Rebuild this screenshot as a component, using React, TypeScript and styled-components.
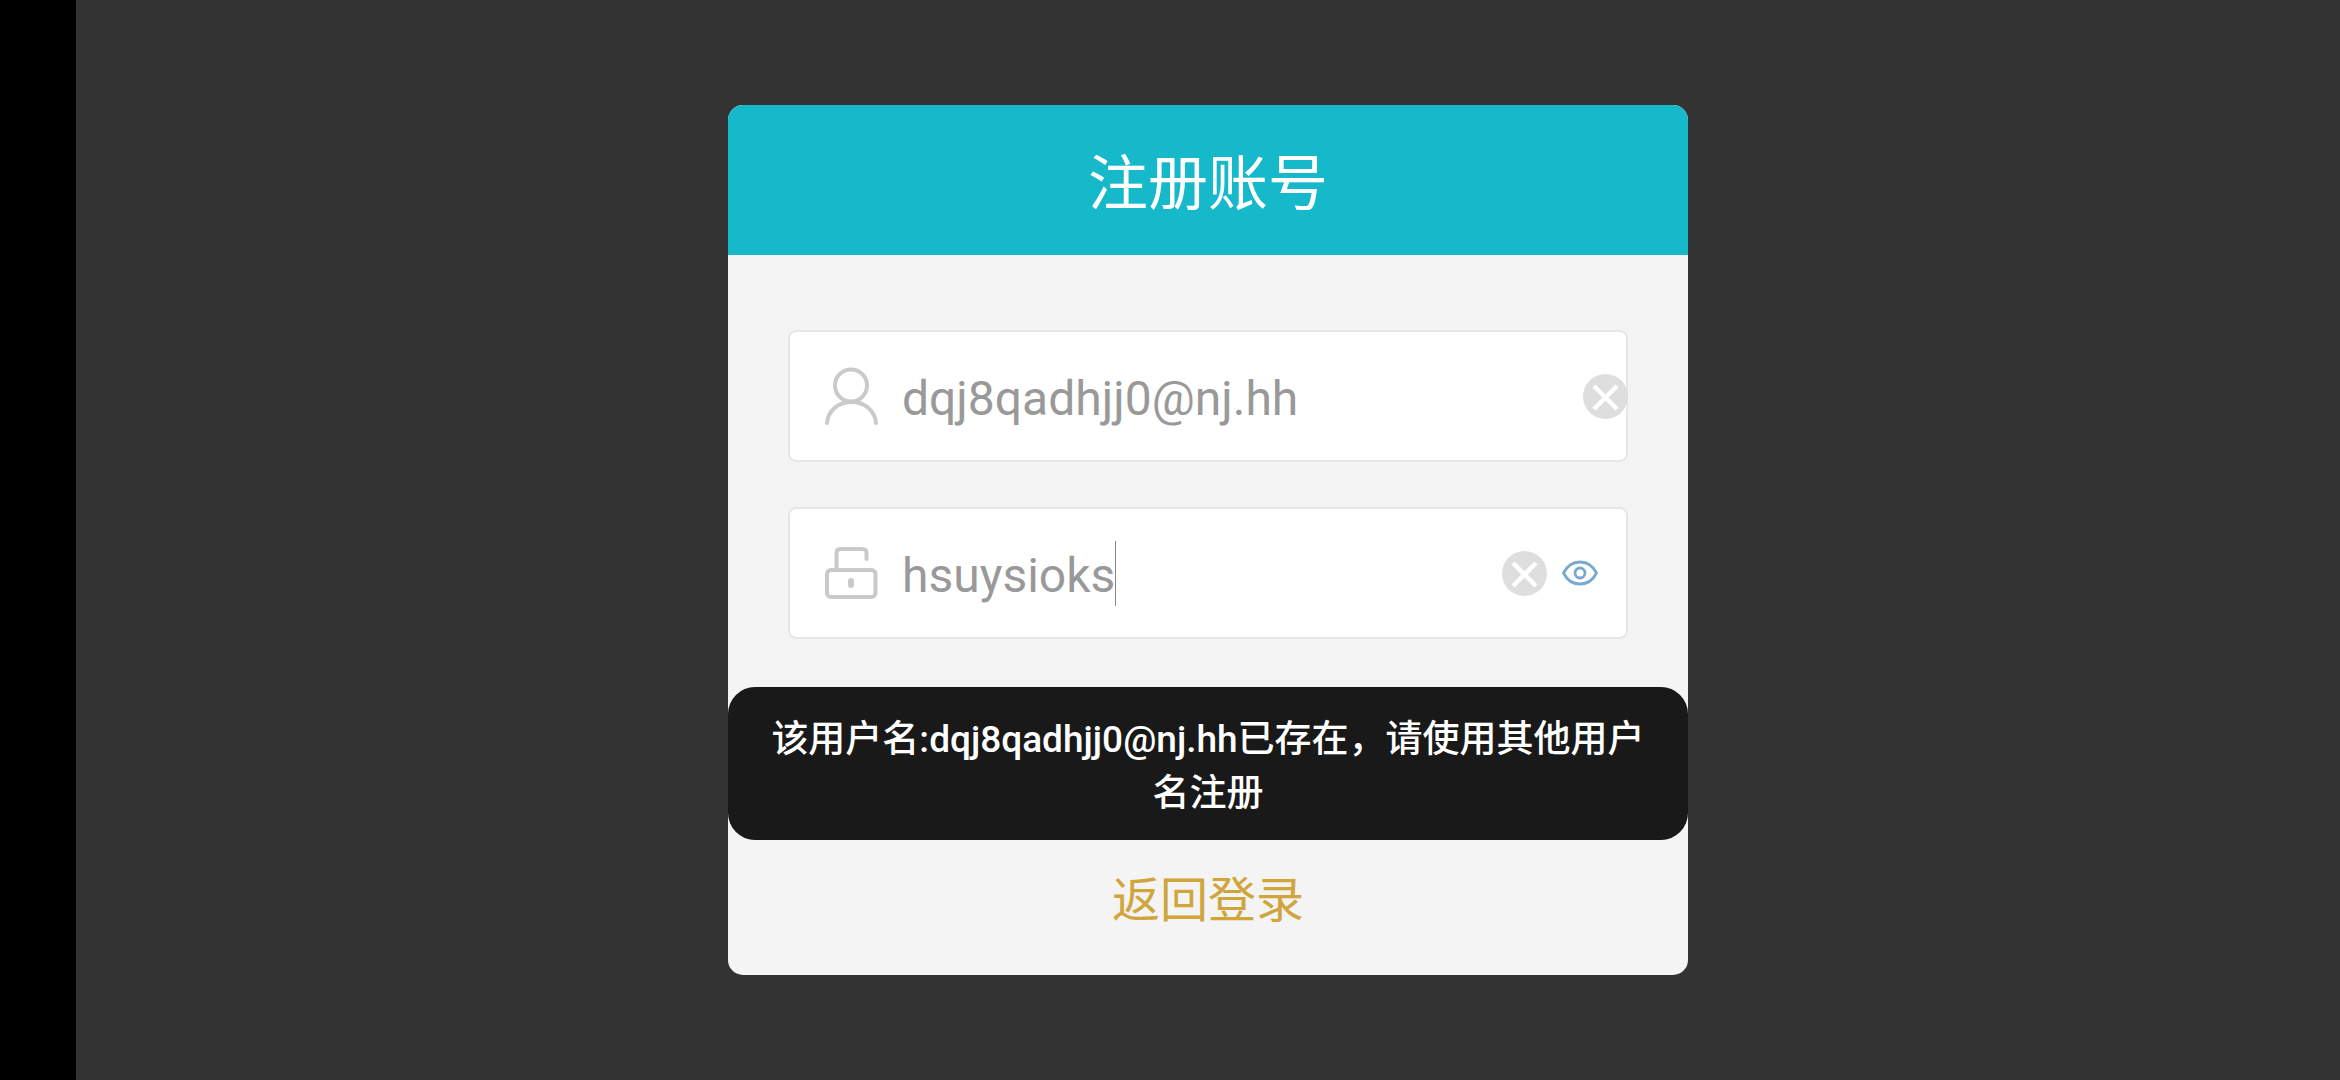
import React, { useId, useState } from "react";
import styled, { createGlobalStyle } from "styled-components";

const GlobalStyle = createGlobalStyle`
  *, *::before, *::after { box-sizing: border-box; }
  body {
    margin: 0;
    background: #333333;
    font-family: Roboto, "Noto Sans CJK SC", sans-serif;
  }
`;

const Screen = styled.div`
  display: flex;
  min-height: 100vh;
`;

const CutoutBar = styled.div`
  flex: 0 0 76px;
  background: #000000;
`;

const Stage = styled.main`
  flex: 1;
  display: flex;
  align-items: center;
  justify-content: center;
`;

const Dialog = styled.section`
  width: 100%;
  max-width: 960px;
  background: #f4f4f4;
  border-radius: 15px;
  overflow: hidden;
`;

const Header = styled.header`
  display: flex;
  align-items: center;
  justify-content: center;
  padding: 35px 30px 25px;
  background: #15b9c9;
`;

const Title = styled.h1`
  margin: 0;
  color: #ffffff;
  font-size: 60px;
  line-height: 90px;
  font-weight: 400;
`;

const Form = styled.form`
  display: flex;
  flex-direction: column;
  gap: 45px;
  padding: 75px 60px 48px;
`;

const Field = styled.div<{ $inset: number }>`
  display: flex;
  align-items: center;
  height: 132px;
  padding-left: 37px;
  padding-right: ${(p) => p.$inset}px;
  background: #ffffff;
  box-shadow: inset 0 0 0 2px #e6e6e6;
  border-radius: 8px;
`;

const FieldLabel = styled.label`
  display: flex;
  margin-right: 23px;
`;

const Value = styled.div`
  flex: 1;
  min-width: 0;
  display: flex;
  align-items: center;
`;

const TextInput = styled.input<{ $hug?: boolean }>`
  ${(p) => (p.$hug ? "field-sizing: content;" : "flex: 1; min-width: 0;")}
  height: 66px;
  padding: 4px 0 0;
  border: 0;
  outline: 0;
  background: transparent;
  color: #999999;
  font: inherit;
  font-size: 48px;
  line-height: 62px;
`;

const Caret = styled.span`
  width: 1px;
  height: 65px;
  background: #888888;
`;

const IconButton = styled.button`
  display: flex;
  padding: 0;
  border: 0;
  background: none;
  cursor: pointer;
`;

const Actions = styled.div`
  display: flex;
  align-items: center;
  gap: 15px;
`;

const Toast = styled.p`
  margin: 0;
  padding: 26px 40px 19px;
  border-radius: 27px;
  background: #191919;
  color: #ffffff;
  font-size: 37px;
  line-height: 54px;
  font-weight: 500;
  text-align: center;
`;

const Footer = styled.footer`
  display: flex;
  justify-content: center;
  padding: 25px 0 38px;
`;

const BackLink = styled.a`
  color: #d0a63c;
  font-size: 48px;
  line-height: 72px;
  text-decoration: none;
`;

const UserIcon = () => (
  <svg width="54" height="60" viewBox="0 0 54 60" fill="none" stroke="#cacaca" strokeWidth="4" strokeLinecap="round" aria-hidden="true">
    <circle cx="26" cy="19.5" r="16" />
    <path d="M2 57C3 45 13 36 26.5 36S50 45 51 57" />
  </svg>
);

const LockIcon = () => (
  <svg width="54" height="60" viewBox="0 0 54 60" fill="none" stroke="#cacaca" strokeWidth="4" strokeLinecap="round" strokeLinejoin="round" aria-hidden="true">
    <rect x="2" y="27" width="48.5" height="27" rx="4" />
    <path d="M11.5 27V10Q11.5 6 15.500 6H37.500Q41.500 6 41.500 10V16" />
    <path d="M26 38V42" strokeWidth="6" />
  </svg>
);

const ClearIcon = () => (
  <svg width="45" height="45" viewBox="0 0 45 45" aria-hidden="true">
    <circle cx="22.5" cy="22.5" r="22.5" fill="#dedede" />
    <path d="M11 12L34 35M34 12L11 35" stroke="#ffffff" strokeWidth="4.5" />
  </svg>
);

const EyeIcon = () => (
  <svg width="36" height="26" viewBox="0 0 36 26" fill="none" stroke="#7aa9cf" strokeWidth="2.8" aria-hidden="true">
    <path d="M1.5 13C5 6 11 2 18 2S31 6 34.5 13C31 20 25 24 18 24S5 20 1.5 13Z" strokeLinejoin="round" />
    <circle cx="18" cy="13" r="5" />
  </svg>
);

export default function App() {
  const [account, setAccount] = useState("dqj8qadhjj0@nj.hh");
  const [password, setPassword] = useState("hsuysioks");
  const [visible, setVisible] = useState(true);
  const accountId = useId();
  const passwordId = useId();

  return (
    <>
      <GlobalStyle />
      <Screen>
        <CutoutBar />
        <Stage>
          <Dialog>
            <Header>
              <Title>注册账号</Title>
            </Header>
            <Form onSubmit={(e) => e.preventDefault()}>
              <Field $inset={0}>
                <FieldLabel htmlFor={accountId}>
                  <UserIcon />
                </FieldLabel>
                <Value>
                  <TextInput id={accountId} value={account} spellCheck={false} onChange={(e) => setAccount(e.target.value)} />
                </Value>
                <IconButton type="button" onClick={() => setAccount("")}>
                  <ClearIcon />
                </IconButton>
              </Field>
              <Field $inset={30}>
                <FieldLabel htmlFor={passwordId}>
                  <LockIcon />
                </FieldLabel>
                <Value>
                  <TextInput
                    $hug
                    id={passwordId}
                    type={visible ? "text" : "password"}
                    value={password}
                    spellCheck={false}
                    onChange={(e) => setPassword(e.target.value)}
                  />
                  <Caret />
                </Value>
                <Actions>
                  <IconButton type="button" onClick={() => setPassword("")}>
                    <ClearIcon />
                  </IconButton>
                  <IconButton type="button" onClick={() => setVisible(!visible)}>
                    <EyeIcon />
                  </IconButton>
                </Actions>
              </Field>
            </Form>
            <Toast role="alert">该用户名:dqj8qadhjj0@nj.hh已存在，请使用其他用户名注册</Toast>
            <Footer>
              <BackLink href="#login">返回登录</BackLink>
            </Footer>
          </Dialog>
        </Stage>
      </Screen>
    </>
  );
}
